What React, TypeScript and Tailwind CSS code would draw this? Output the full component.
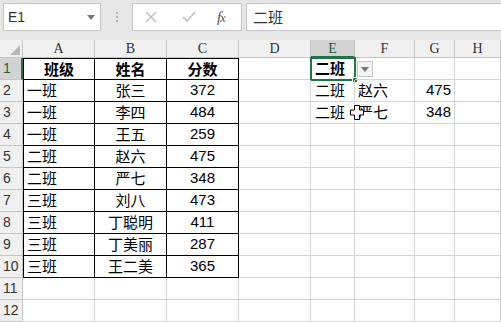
import React from "react";

const cols = [
  { k: "A", w: "w-[72px]" },
  { k: "B", w: "w-[72px]" },
  { k: "C", w: "w-[72px]" },
  { k: "D", w: "w-[72px]" },
  { k: "E", w: "w-[44px]" },
  { k: "F", w: "w-[60px]" },
  { k: "G", w: "w-[40px]" },
  { k: "H", w: "w-[46px]" },
];

const data: [string, string, string][] = [
  ["一班", "张三", "372"],
  ["一班", "李四", "484"],
  ["一班", "王五", "259"],
  ["二班", "赵六", "475"],
  ["二班", "严七", "348"],
  ["三班", "刘八", "473"],
  ["三班", "丁聪明", "411"],
  ["三班", "丁美丽", "287"],
  ["三班", "王二美", "365"],
];

const cjk = "font-['Noto_Sans_CJK_SC','Noto_Sans',sans-serif]";
const num = "font-['Liberation_Sans','Noto_Sans',sans-serif]";

function Cursor() {
  return (
    <svg className="absolute left-[-5px] top-[3px]" width="14" height="15" viewBox="0 0 14 15">
      <path
        d="M4.5 0.5 H9.5 V5 H13.5 V10 H9.5 V14.5 H4.5 V10 H0.5 V5 H4.5 Z"
        fill="#fff"
        stroke="#000"
        strokeWidth="1"
      />
    </svg>
  );
}

export default function App() {
  const rows = Array.from({ length: 12 }, (_, i) => i + 1);

  const cellContent = (r: number, c: string): React.ReactNode => {
    if (r === 1) {
      if (c === "A") return <span className={`${cjk} font-bold`}>班级</span>;
      if (c === "B") return <span className={`${cjk} font-bold`}>姓名</span>;
      if (c === "C") return <span className={`${cjk} font-bold`}>分数</span>;
      if (c === "E") return <span className={`${cjk} font-bold`}>二班</span>;
      return null;
    }
    if (r >= 2 && r <= 10) {
      const d = data[r - 2];
      if (c === "A") return <span className={cjk}>{d[0]}</span>;
      if (c === "B") return <span className={cjk}>{d[1]}</span>;
      if (c === "C") return <span className={num}>{d[2]}</span>;
    }
    if (r === 2) {
      if (c === "E") return <span className={cjk}>二班</span>;
      if (c === "F") return <span className={cjk}>赵六</span>;
      if (c === "G") return <span className={num}>475</span>;
    }
    if (r === 3) {
      if (c === "E") return <span className={cjk}>二班</span>;
      if (c === "F") return <span className={cjk}>严七</span>;
      if (c === "G") return <span className={num}>348</span>;
    }
    return null;
  };

  const align = (r: number, c: string) => {
    if (r >= 1 && r <= 10 && (c === "B" || c === "C")) return "justify-center";
    if (r === 1 && c === "A") return "justify-center";
    if (c === "G") return "justify-end pr-[3px]";
    if (c === "F") return "justify-start pl-[3px]";
    if (c === "E") return "justify-start pl-[4px]";
    return "justify-start pl-[3px]";
  };

  return (
    <div className="w-[501px] h-[322px] overflow-hidden bg-white text-black relative">
      {/* top formula bar */}
      <div className="h-[40px] bg-[#e6e6e6] flex items-start pt-[3px]">
        <div className="ml-[3px] w-[98px] h-[28px] bg-white border border-[#c6c6c6] flex items-center justify-between pl-[4px] pr-[5px]">
          <span className="font-['Liberation_Sans',sans-serif] text-[14px] text-[#333]">E1</span>
          <svg width="8" height="5" viewBox="0 0 8 5">
            <path d="M0 0 H8 L4 5 Z" fill="#777" />
          </svg>
        </div>
        <div className="w-[31px] h-[28px] flex flex-col items-center justify-center gap-[2px]">
          <div className="w-[2px] h-[2px] bg-[#b0b0b0]" />
          <div className="w-[2px] h-[2px] bg-[#b0b0b0]" />
          <div className="w-[2px] h-[2px] bg-[#b0b0b0]" />
        </div>
        <div className="w-[110px] h-[28px] bg-white border border-[#c6c6c6] flex items-center">
          <svg className="ml-[12px]" width="12" height="12" viewBox="0 0 12 12">
            <path d="M1 1 L11 11 M11 1 L1 11" stroke="#c0c0c0" strokeWidth="1.5" />
          </svg>
          <svg className="ml-[25px]" width="14" height="12" viewBox="0 0 14 12">
            <path d="M1 6 L5 10 L13 1" stroke="#c0c0c0" strokeWidth="1.6" fill="none" />
          </svg>
          <span className="ml-[21px] font-['Liberation_Serif',serif] italic text-[15px] text-[#555] tracking-[-1px]">
            f<span className="text-[12px]">x</span>
          </span>
        </div>
        <div className="ml-[4px] flex-1 h-[28px] bg-white border border-[#c6c6c6] border-r-0 flex items-center pl-[6px]">
          <span className="font-['Noto_Sans_CJK_SC',serif] text-[15px] text-[#333]">二班</span>
        </div>
      </div>

      {/* column header */}
      <div className="flex h-[18px]">
        <div className="w-[23px] h-[18px] bg-[#f0f0f0] border-r border-b border-[#c6c6c6] flex items-end justify-end pr-[2px] pb-[2px]">
          <svg width="10" height="10" viewBox="0 0 10 10">
            <path d="M10 0 V10 H0 Z" fill="#b8b8b8" />
          </svg>
        </div>
        {cols.map((c) => (
          <div
            key={c.k}
            className={`${c.w} h-[18px] border-r flex items-center justify-center font-['Liberation_Serif',serif] text-[14px] ${
              c.k === "E"
                ? "bg-[#d3d3d3] border-[#c6c6c6] border-b-2 border-b-[#217346] text-[#1f5f3a]"
                : "bg-[#f0f0f0] border-[#c6c6c6] border-b text-[#333]"
            }`}
          >
            {c.k}
          </div>
        ))}
      </div>

      {/* rows */}
      {rows.map((r) => (
        <div key={r} className="flex h-[22px]">
          <div
            className={`w-[23px] h-[22px] border-b flex items-center pl-[3px] font-['Liberation_Sans',sans-serif] text-[14px] ${
              r === 1
                ? "bg-[#d3d3d3] border-b-[#c6c6c6] border-r-2 border-r-[#217346] text-[#1f5f3a]"
                : "bg-[#f0f0f0] border-b-[#c6c6c6] border-r border-r-[#c6c6c6] text-[#333]"
            }`}
          >
            {r}
          </div>
          {cols.map((c) => {
            const inTable = r <= 10 && (c.k === "A" || c.k === "B" || c.k === "C");
            const borders = inTable
              ? `border-r border-b border-black ${c.k === "A" ? "border-l" : ""} ${r === 1 ? "border-t" : ""}`
              : "border-r border-b border-[#d4d4d4]";
            return (
              <div
                key={c.k}
                className={`${c.w} h-[22px] ${borders} relative flex items-center text-[15px] ${align(r, c.k)}`}
              >
                {cellContent(r, c.k)}
                {r === 1 && c.k === "E" && (
                  <div className="absolute left-[-1px] top-[-1px] w-[46px] h-[24px] border-2 border-[#217346]">
                    <div className="absolute right-[-4px] bottom-[-4px] w-[6px] h-[6px] bg-[#217346] border border-white" />
                  </div>
                )}
                {r === 1 && c.k === "F" && (
                  <div className="absolute left-[2px] top-[3px] w-[16px] h-[16px] bg-[#f4f4f4] border border-[#c6c6c6] flex items-center justify-center">
                    <svg width="8" height="5" viewBox="0 0 8 5">
                      <path d="M0 0 H8 L4 5 Z" fill="#777" />
                    </svg>
                  </div>
                )}
                {r === 3 && c.k === "F" && <Cursor />}
              </div>
            );
          })}
        </div>
      ))}
    </div>
  );
}
